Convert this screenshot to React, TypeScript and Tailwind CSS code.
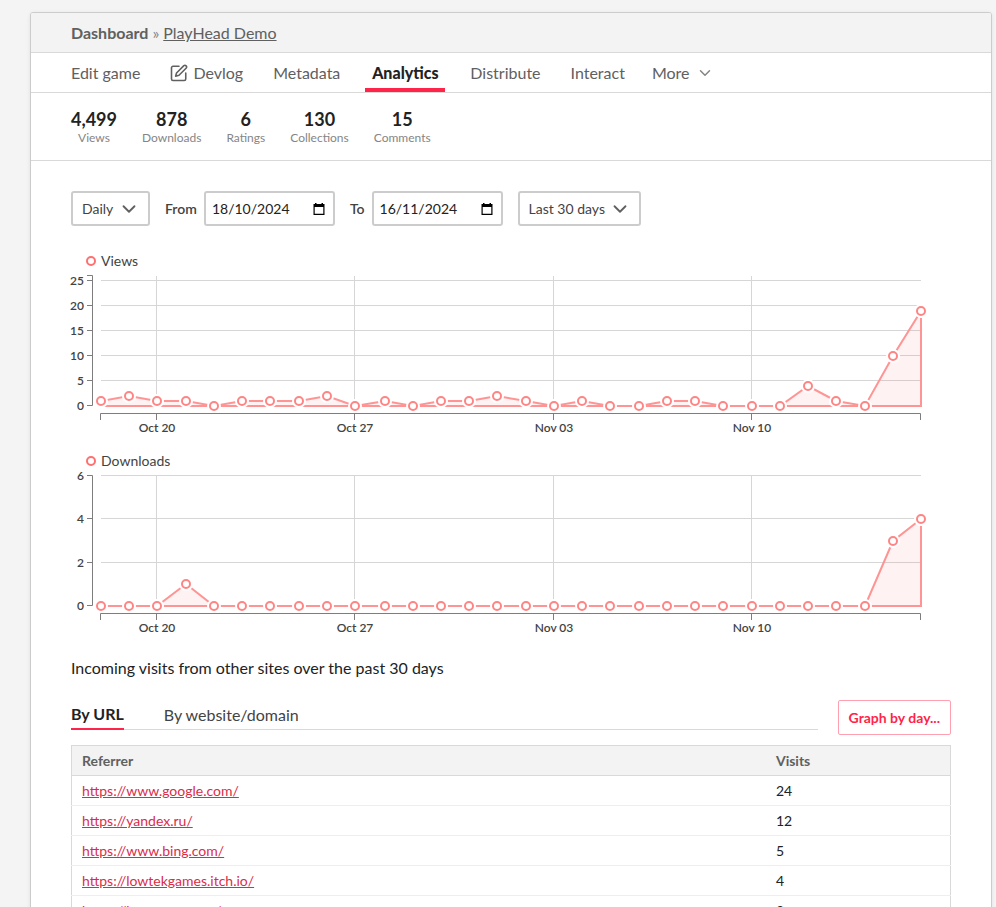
import React from "react";
import { ChevronDown } from "lucide-react";

const navLink = "flex items-center px-[5px] text-[#606060]";

function DevlogIcon() {
  return (
    <svg
      width="18"
      height="18"
      viewBox="0 0 24 24"
      fill="none"
      stroke="currentColor"
      strokeWidth="2.1"
      strokeLinecap="round"
      strokeLinejoin="round"
      className="mr-[5px]"
      aria-hidden="true"
    >
      <path d="M12 3H4a2 2 0 0 0-2 2v15a2 2 0 0 0 2 2h15a2 2 0 0 0 2-2v-8" />
      <path d="M18.5 2.2a2.3 2.3 0 0 1 3.2 3.2L12 15l-4.5 1.2L8.700 12z" />
    </svg>
  );
}

function CalendarIcon() {
  return (
    <svg width="12" height="12" viewBox="0 0 12 12" aria-hidden="true">
      <path
        d="M2 0h1.500v1h5V0H10v1h1.500v11H.5V1H2z M1.700 4v6.800h8.600V4z"
        fill="#000"
        fillRule="evenodd"
      />
    </svg>
  );
}

const stats = [
  { value: "4,499", label: "Views" },
  { value: "878", label: "Downloads" },
  { value: "6", label: "Ratings" },
  { value: "130", label: "Collections" },
  { value: "15", label: "Comments" },
];

function Dropdown({ label, options, className }: { label: string; options: string[]; className: string }) {
  return (
    <div className={"relative " + className}>
      <select
        aria-label={label}
        className="h-[35px] w-full appearance-none rounded-[3px] border-2 border-[#cccccc] bg-white pl-[9px] text-sm text-[#434343]"
      >
        {options.map((o) => (
          <option key={o}>{o}</option>
        ))}
      </select>
      <ChevronDown
        size={22}
        strokeWidth={2}
        className="pointer-events-none absolute right-2.5 top-[7px] text-[#606060]"
        aria-hidden="true"
      />
    </div>
  );
}

function DateField({ id, label, value }: { id: string; label: string; value: string }) {
  return (
    <div className="flex items-center gap-[7px]">
      <label htmlFor={id} className="text-sm font-semibold text-[#434343]">
        {label}
      </label>
      <div className="flex h-[35px] w-[131px] items-center justify-between rounded-[3px] border-2 border-[#cccccc] bg-white pl-1.5 pr-2">
        <input id={id} defaultValue={value} className="w-[84px] text-sm text-[#222222] outline-none" />
        <button type="button" aria-label={"Pick date: " + label}>
          <CalendarIcon />
        </button>
      </div>
    </div>
  );
}

const viewsData = [
  1, 2, 1, 1, 0, 1, 1, 1, 2, 0, 1, 0, 1, 1, 2, 1, 0, 1, 0, 0, 1, 1, 0, 0, 0, 4, 1, 0, 10, 19,
];
const downloadsData = [
  0, 0, 0, 1, 0, 0, 0, 0, 0, 0, 0, 0, 0, 0, 0, 0, 0, 0, 0, 0, 0, 0, 0, 0, 0, 0, 0, 0, 3, 4,
];
const weeks = [
  { index: 2, label: "Oct 20" },
  { index: 9, label: "Oct 27" },
  { index: 16, label: "Nov 03" },
  { index: 23, label: "Nov 10" },
];

const LEFT = 30;
const RIGHT = 850;
const TOP = 5;
const BASE = 135;

// The clocks go back after the tenth day, which makes that day an hour longer.
function xAt(i: number) {
  const hours = i * 24 + (i > 9 ? 1 : 0);
  return Math.round(LEFT + (hours * (RIGHT - LEFT)) / (29 * 24 + 1));
}

function Chart({ title, data, max, ticks }: { title: string; data: number[]; max: number; ticks: number[] }) {
  const yAt = (v: number) => Math.round(BASE - (v * (BASE - TOP)) / max);
  const points = data.map((v, i) => ({ x: xAt(i), y: yAt(v) }));
  const area =
    "M" + LEFT + " " + BASE + points.map((p) => "L" + p.x + " " + p.y).join("") + "L" + RIGHT + " " + BASE + "Z";
  return (
    <section className="mb-2.5">
      <h3 className="flex h-5 items-center gap-[5px] pl-[15px] text-sm text-[#434343]">
        <span className="size-2.5 rounded-full border-2 border-[#ff7070]" />
        {title}
      </h3>
      <svg viewBox="0 0 880 170" className="block w-full overflow-visible" role="img" aria-label={title + " per day"}>
        <g stroke="#d6d6d6" fill="none">
          {ticks.map((t) => (
            <path key={t} d={"M" + LEFT + " " + (yAt(t) - 0.5) + "H" + RIGHT} />
          ))}
          {weeks.map((w) => (
            <path key={w.label} d={"M" + (xAt(w.index) - 0.5) + " " + TOP + "V" + BASE} />
          ))}
        </g>
        <path d={area} fill="#ff7070" fillOpacity="0.09" stroke="#ff9494" strokeWidth="2" />
        {points.map((p, i) => (
          <g key={i}>
            <circle cx={p.x} cy={p.y} r="7" fill="#fff" />
            <circle cx={p.x} cy={p.y} r="4" fill="#fff" stroke="#ff8585" strokeWidth="2" />
          </g>
        ))}
        <g stroke="#7d7d7d" fill="none">
          <path d={"M16 " + (TOP - 0.5) + "H21.500V" + (BASE - 0.5) + "H16"} />
          <path d={"M29.500 149V142.500H" + (RIGHT - 0.5) + "V149"} />
          {ticks.map((t) => (
            <path key={t} d={"M16 " + (yAt(t) - 0.5) + "H21"} />
          ))}
          {weeks.map((w) => (
            <path key={w.label} d={"M" + (xAt(w.index) - 0.5) + " 143V149"} />
          ))}
        </g>
        <g fill="#434343" className="text-xs font-semibold">
          {ticks.map((t) => (
            <text key={t} x="13" y={yAt(t) + 4} textAnchor="end">
              {t}
            </text>
          ))}
          {weeks.map((w) => (
            <text key={w.label} x={xAt(w.index)} y="161" textAnchor="middle">
              {w.label}
            </text>
          ))}
        </g>
      </svg>
    </section>
  );
}

const referrers = [
  { url: "https://www.google.com/", visits: 24 },
  { url: "https://yandex.ru/", visits: 12 },
  { url: "https://www.bing.com/", visits: 5 },
  { url: "https://lowtekgames.itch.io/", visits: 4 },
  { url: "https://bestgame.com/", visits: 3 },
];

export default function App() {
  return (
    <div className="h-screen overflow-hidden bg-[#f4f4f4] pl-[30px] pr-1 pt-3 font-['Lato',sans-serif] text-[#222222]">
      <main className="min-h-full rounded-[3px] border border-[#cccccc] bg-white shadow-[0_1px_4px_rgba(0,0,0,0.08)]">
        <header className="flex h-10 items-center gap-1 rounded-t-[2px] border-b border-[#d9d9d9] bg-[#f3f3f3] px-10 text-[#606060]">
          <a href="#dashboard" className="font-bold">
            Dashboard
          </a>
          <span className="text-[#858585]">»</span>
          <a href="#game" className="underline">
            PlayHead Demo
          </a>
        </header>

        <nav className="flex h-10 gap-5 border-b border-[#d9d9d9] px-[35px]">
          <a href="#edit" className={navLink}>
            Edit game
          </a>
          <a href="#devlog" className={navLink}>
            <DevlogIcon />
            Devlog
          </a>
          <a href="#metadata" className={navLink}>
            Metadata
          </a>
          <a
            href="#analytics"
            className="flex w-20 items-center justify-center border-b-4 border-[#ff2449] pt-1 font-black text-[#222222]"
          >
            Analytics
          </a>
          <a href="#distribute" className={navLink}>
            Distribute
          </a>
          <a href="#interact" className={navLink}>
            Interact
          </a>
          <button type="button" className="flex items-center gap-1.5 pl-0.5 text-[#606060]">
            More
            <ChevronDown size={18} strokeWidth={2} className="text-[#858585]" aria-hidden="true" />
          </button>
        </nav>

        <dl className="flex h-[68px] items-center gap-[25px] border-b border-[#d9d9d9] px-10">
          {stats.map((s) => (
            <div key={s.label} className="flex flex-col-reverse text-center">
              <dt className="text-xs leading-4 text-[#858585]">{s.label}</dt>
              <dd className="text-lg font-bold leading-[22px]">{s.value}</dd>
            </div>
          ))}
        </dl>

        <div className="px-10 pt-[30px]">
          <form className="mb-[25px] flex items-center gap-[15px]">
            <Dropdown label="Interval" options={["Daily", "Weekly"]} className="w-[79px]" />
            <DateField id="from" label="From" value="18/10/2024" />
            <DateField id="to" label="To" value="16/11/2024" />
            <Dropdown label="Range" options={["Last 30 days", "Last 7 days"]} className="w-[123px]" />
          </form>

          <Chart title="Views" data={viewsData} max={26} ticks={[0, 5, 10, 15, 20, 25]} />
          <Chart title="Downloads" data={downloadsData} max={6} ticks={[0, 2, 4, 6]} />

          <p className="mt-[17px] leading-5">Incoming visits from other sites over the past 30 days</p>

          <div className="mt-[22px] flex items-start gap-5">
            <div className="flex h-[30px] flex-1 gap-10 border-b border-[#d9d9d9]">
              <button
                type="button"
                className="-mb-px flex items-center border-b-2 border-[#ff2449] font-bold text-[#222222]"
              >
                By URL
              </button>
              <button type="button" className="flex items-center text-[#434343]">
                By website/domain
              </button>
            </div>
            <button
              type="button"
              className="h-[35px] rounded-[2px] border border-[#ffa0b0] px-2.5 text-sm font-bold text-[#ff2449]"
            >
              Graph by day...
            </button>
          </div>

          <table className="mt-2.5 w-full border-collapse border border-[#d9d9d9] text-left text-sm">
            <thead>
              <tr className="h-[30px] border-b border-[#d9d9d9] bg-[#f3f3f3] text-[#606060]">
                <th className="w-[79%] px-2.5 font-bold">Referrer</th>
                <th className="px-2.5 font-bold">Visits</th>
              </tr>
            </thead>
            <tbody>
              {referrers.map((r) => (
                <tr key={r.url} className="h-[30px] border-b border-[#eeeeee]">
                  <td className="px-2.5">
                    <a href={r.url} className="text-[#da2c49] underline">
                      {r.url}
                    </a>
                  </td>
                  <td className="px-2.5">{r.visits}</td>
                </tr>
              ))}
            </tbody>
          </table>
        </div>
      </main>
    </div>
  );
}
